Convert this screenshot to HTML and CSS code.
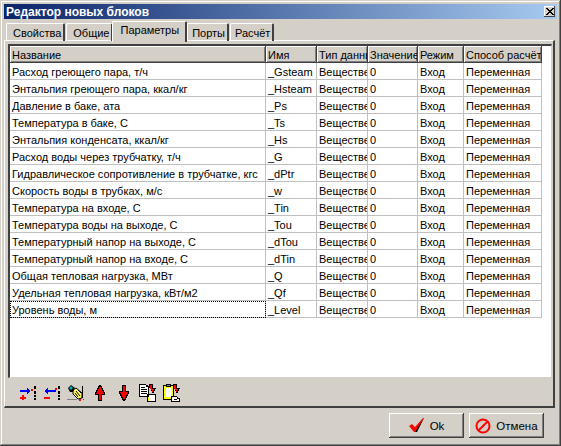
FILE: index.html
```html
<!DOCTYPE html>
<html lang="ru">
<head>
    <meta charset="UTF-8">
    <title>Редактор новых блоков</title>
    <link rel="stylesheet" href="styles.css">
</head>
<body>
    <div class="window">
        <div class="titlebar">
            <span class="title">Редактор новых блоков</span>
            <span class="close-btn">
                <svg width="8" height="7" viewBox="0 0 8 7" shape-rendering="crispEdges"><path d="M0 0h2v1h-2zM6 0h2v1h-2zM1 1h2v1h-2zM5 1h2v1h-2zM2 2h4v1h-4zM3 3h2v1h-2zM2 4h4v1h-4zM1 5h2v1h-2zM5 5h2v1h-2zM0 6h2v1h-2zM6 6h2v1h-2z" fill="#000"/></svg>
            </span>
        </div>

        <div class="tabs">
            <div class="tab">Свойства</div>
            <div class="tab">Общие</div>
            <div class="tab active">Параметры</div>
            <div class="tab">Порты</div>
            <div class="tab">Расчёт</div>
        </div>

        <div class="panel">
            <div class="grid-box">
                <div class="row head">
                    <div class="cell">Название</div>
                    <div class="cell">Имя</div>
                    <div class="cell">Тип данных</div>
                    <div class="cell">Значение</div>
                    <div class="cell">Режим</div>
                    <div class="cell">Способ расчёта</div>
                </div>
                <div class="row"><div class="cell">Расход греющего пара, т/ч</div><div class="cell">_Gsteam</div><div class="cell">Вещественное</div><div class="cell">0</div><div class="cell">Вход</div><div class="cell">Переменная</div></div>
                <div class="row"><div class="cell">Энтальпия греющего пара, ккал/кг</div><div class="cell">_Hsteam</div><div class="cell">Вещественное</div><div class="cell">0</div><div class="cell">Вход</div><div class="cell">Переменная</div></div>
                <div class="row"><div class="cell">Давление в баке, ата</div><div class="cell">_Ps</div><div class="cell">Вещественное</div><div class="cell">0</div><div class="cell">Вход</div><div class="cell">Переменная</div></div>
                <div class="row"><div class="cell">Температура в баке, С</div><div class="cell">_Ts</div><div class="cell">Вещественное</div><div class="cell">0</div><div class="cell">Вход</div><div class="cell">Переменная</div></div>
                <div class="row"><div class="cell">Энтальпия конденсата, ккал/кг</div><div class="cell">_Hs</div><div class="cell">Вещественное</div><div class="cell">0</div><div class="cell">Вход</div><div class="cell">Переменная</div></div>
                <div class="row"><div class="cell">Расход воды через трубчатку, т/ч</div><div class="cell">_G</div><div class="cell">Вещественное</div><div class="cell">0</div><div class="cell">Вход</div><div class="cell">Переменная</div></div>
                <div class="row"><div class="cell">Гидравлическое сопротивление в трубчатке, кгс</div><div class="cell">_dPtr</div><div class="cell">Вещественное</div><div class="cell">0</div><div class="cell">Вход</div><div class="cell">Переменная</div></div>
                <div class="row"><div class="cell">Скорость воды в трубках, м/с</div><div class="cell">_w</div><div class="cell">Вещественное</div><div class="cell">0</div><div class="cell">Вход</div><div class="cell">Переменная</div></div>
                <div class="row"><div class="cell">Температура на входе, С</div><div class="cell">_Tin</div><div class="cell">Вещественное</div><div class="cell">0</div><div class="cell">Вход</div><div class="cell">Переменная</div></div>
                <div class="row"><div class="cell">Температура воды на выходе, С</div><div class="cell">_Tou</div><div class="cell">Вещественное</div><div class="cell">0</div><div class="cell">Вход</div><div class="cell">Переменная</div></div>
                <div class="row"><div class="cell">Температурный напор на выходе, С</div><div class="cell">_dTou</div><div class="cell">Вещественное</div><div class="cell">0</div><div class="cell">Вход</div><div class="cell">Переменная</div></div>
                <div class="row"><div class="cell">Температурный напор на входе, С</div><div class="cell">_dTin</div><div class="cell">Вещественное</div><div class="cell">0</div><div class="cell">Вход</div><div class="cell">Переменная</div></div>
                <div class="row"><div class="cell">Общая тепловая нагрузка, МВт</div><div class="cell">_Q</div><div class="cell">Вещественное</div><div class="cell">0</div><div class="cell">Вход</div><div class="cell">Переменная</div></div>
                <div class="row"><div class="cell">Удельная тепловая нагрузка, кВт/м2</div><div class="cell">_Qf</div><div class="cell">Вещественное</div><div class="cell">0</div><div class="cell">Вход</div><div class="cell">Переменная</div></div>
                <div class="row"><div class="cell focused">Уровень воды, м</div><div class="cell">_Level</div><div class="cell">Вещественное</div><div class="cell">0</div><div class="cell">Вход</div><div class="cell">Переменная</div></div>
            </div>

            <div class="toolbar">
                <span class="tool"><svg width="18" height="16" viewBox="0 0 18 16" shape-rendering="crispEdges"><path d="M1 5h9v2h-9zM8 3h1v6h-1zM9 4h1v4h-1zM10 5h1v2h-1z" fill="#00f"/><path d="M3 10h2v5h-2zM1 12h6v2h-6z" fill="#f00"/><path d="M12 4h2v2h-2z" fill="#f00"/><path d="M15 1h2v3h-2zM15 6h2v3h-2zM15 10h2v2h-2zM15 13h2v2h-2z" fill="#000"/></svg></span>
                <span class="tool"><svg width="18" height="16" viewBox="0 0 18 16" shape-rendering="crispEdges"><path d="M4 5h9v2h-9zM4 3h1v6h-1zM3 4h1v4h-1zM2 5h1v2h-1z" fill="#00f"/><path d="M1 12h6v2h-6z" fill="#f00"/><path d="M12 3h2v2h-2z" fill="#f00"/><path d="M15 1h2v3h-2zM15 6h2v3h-2zM15 10h2v2h-2zM15 13h2v2h-2z" fill="#000"/></svg></span>
                <span class="tool"><svg width="18" height="16" viewBox="0 0 18 16"><path d="M6 5L9 3L15 8V13L11 14L6 9Z" fill="#ffff60" stroke="#000"/><path d="M9 6L13 11M11 5L14 8M8 8L11 12" stroke="#000" fill="none"/><path d="M15.5 1V13" stroke="#000"/><path d="M1 3L4 0L8 3L6 7L3 7Z" fill="#000"/><path d="M2 3L4 1L6 3L4 5Z" fill="#00b0b0"/><path d="M0 14.5H10" stroke="#808080"/><path d="M12 14h2v2h-2zM16 14h1v1h-1z" fill="#f00"/></svg></span>
                <span class="tool"><svg width="16" height="16" viewBox="0 0 16 16" shape-rendering="crispEdges"><path d="M7 0h2v1h1v2h1v2h1v2h1v3h-3v6h-4v-6h-3v-3h1v-2h1v-2h1v-2h1z" fill="#000"/><path d="M7 2h2v2h1v2h1v2h1v1h-3v6h-2v-6h-3v-1h1v-2h1v-2h1z" fill="#f00"/></svg></span>
                <span class="tool"><svg width="16" height="16" viewBox="0 0 16 16" shape-rendering="crispEdges"><path d="M6 0h4v6h3v3h-1v2h-1v2h-1v2h-1v1h-2v-1h-1v-2h-1v-2h-1v-2h-1v-3h3z" fill="#000"/><path d="M7 1h2v6h3v1h-1v2h-1v2h-1v2h-2v-2h-1v-2h-1v-2h-1v-1h3z" fill="#f00"/></svg></span>
                <span class="tool"><svg width="18" height="18" viewBox="0 0 18 18" shape-rendering="crispEdges"><path d="M0 0h7v1h2v1h1v11h-10z" fill="#000"/><path d="M1 1h6v2h2v9h-8z" fill="#fff"/><path d="M2 3h4v1h-4zM2 5h6v1h-6zM2 7h6v1h-6zM2 9h6v1h-6z" fill="#000"/><path d="M8 10h9v8h-9z" fill="#000"/><path d="M9 13h1v4h-1z" fill="#ffff00"/><path d="M10 11h6v6h-6z" fill="#fff"/><path d="M10 0h4v4h3v1h-1v2h-1v2h-2v-2h-1v-2h-1v-1h-1z" fill="#000"/><path d="M11 1h2v4h2v1h-1v2h-1v-2h-1v-1h-1z" fill="#f00"/></svg></span>
                <span class="tool"><svg width="18" height="18" viewBox="0 0 18 18" shape-rendering="crispEdges"><path d="M0 1h11v15h-11z" fill="#000"/><path d="M1 2h9v13h-9z" fill="#ffff00"/><path d="M3 4h5v9h-5z" fill="#fff"/><path d="M3 0h5v3h-5z" fill="#000"/><path d="M4 1h3v1h-3z" fill="#808080"/><path d="M8 12h6v1h1v1h2v4h-9z" fill="#000"/><path d="M9 13h5v2h2v2h-7z" fill="#fff"/><path d="M11 15h3v1h-3z" fill="#000"/><path d="M10 0h4v4h3v1h-1v2h-1v2h-2v-2h-1v-2h-1v-1h-1z" fill="#000"/><path d="M11 1h2v4h2v1h-1v2h-1v-2h-1v-1h-1z" fill="#f00"/></svg></span>
            </div>
        </div>

        <div class="footer">
            <button class="btn">
                <svg width="16" height="15" viewBox="0 0 16 15"><path d="M0 8l3-2 3 3 8-9h1l-8 14h-2z" fill="#f00"/><path d="M6 14l9-14-7 14z" fill="#000"/></svg>
                Ok
            </button>
            <button class="btn">
                <svg width="16" height="16" viewBox="0 0 16 16"><circle cx="8" cy="8" r="6.5" fill="none" stroke="#f00" stroke-width="2"/><path d="M3.5 12.5l9-9" stroke="#f00" stroke-width="2"/></svg>
                Отмена
            </button>
        </div>
    </div>
</body>
</html>
```

FILE: styles.css
```css
/* Whole dialog */
body {
    margin: 0;
    background: #d4d0c8;
    font-family: "Liberation Sans", Arial, sans-serif;
    font-size: 11px;
    color: #000;
}

.window {
    box-sizing: border-box;
    width: 561px;
    height: 446px;
    padding: 4px;
    background: #d4d0c8;
    box-shadow: inset -1px -1px 0 #404040, inset 1px 1px 0 #d4d0c8, inset -2px -2px 0 #808080, inset 2px 2px 0 #fff;
    overflow: hidden;
}

/* Title bar */
.titlebar {
    display: flex;
    align-items: center;
    justify-content: space-between;
    height: 15px;
    padding: 0 2px;
    background: linear-gradient(to right, #0a246a, #a6caf0);
}

.title {
    color: #fff;
    font-weight: bold;
    font-size: 12px;
    line-height: 16px;
}

.close-btn {
    display: flex;
    align-items: center;
    justify-content: center;
    box-sizing: border-box;
    width: 11px;
    height: 11px;
    background: #d4d0c8;
    box-shadow: inset -1px -1px 0 #404040, inset 1px 1px 0 #fff;
}

/* Tabs */
.tabs {
    display: flex;
    height: 22px;
    padding: 2px 0 0 2px;
    box-sizing: border-box;
    align-items: flex-end;
}

.tab {
    box-sizing: border-box;
    height: 18px;
    margin-right: 1px;
    padding: 3px 2px 0 6px;
    border-left: 1px solid #fff;
    border-top: 1px solid #fff;
    border-right: 2px solid #404040;
    border-radius: 2px 2px 0 0;
    white-space: nowrap;
}

.tab.active {
    position: relative;
    z-index: 1;
    height: 21px;
    margin: -2px 0 -1px -2px;
    padding: 2px 6px 0 7px;
    background: #d4d0c8;
}

.tab.active ~ .tab {
    padding-left: 4px;
}

/* Page under the tabs */
.panel {
    box-sizing: border-box;
    width: 551px;
    height: 368px;
    margin-top: -1px;
    padding: 3px 2px 0 3px;
    border-left: 1px solid #fff;
    border-top: 1px solid #fff;
    border-right: 2px solid #404040;
    border-bottom: 2px solid #404040;
}

.grid-box {
    box-sizing: border-box;
    width: 544px;
    height: 334px;
    background: #fff;
    border-left: 2px solid #404040;
    border-top: 2px solid #404040;
    border-right: 1px solid #d4d0c8;
    border-bottom: 1px solid #d4d0c8;
    overflow: hidden;
}

.row {
    display: grid;
    grid-template-columns: 256px 51px 51px 50px 46px 78px;
    height: 17px;
    width: 532px;
}

.cell {
    box-sizing: border-box;
    height: 17px;
    line-height: 18px;
    padding-left: 2px;
    white-space: nowrap;
    overflow: hidden;
    border-right: 1px solid #c0c0c0;
    border-bottom: 1px solid #c0c0c0;
}

.head .cell {
    background: #d4d0c8;
    border-right: 1px solid #404040;
    border-bottom: 1px solid #404040;
    box-shadow: inset 1px 1px 0 #fff, inset -1px -1px 0 #808080;
}

.cell.focused {
    outline: 1px dotted #000;
    outline-offset: -1px;
}

/* Toolbar under the grid */
.toolbar {
    display: flex;
    align-items: center;
    height: 24px;
    padding-left: 8px;
    margin-top: 3px;
}

.tool {
    display: flex;
    justify-content: center;
    width: 24px;
}

/* Bottom buttons */
.footer {
    display: flex;
    justify-content: flex-end;
    gap: 5px;
    padding: 5px 13px 0 0;
}

.btn {
    display: flex;
    align-items: center;
    justify-content: center;
    gap: 5px;
    box-sizing: border-box;
    width: 75px;
    height: 25px;
    padding: 0;
    font-family: inherit;
    font-size: 11.5px;
    background: #d4d0c8;
    border: none;
    box-shadow: inset -1px -1px 0 #404040, inset 1px 1px 0 #fff, inset -2px -2px 0 #808080;
}
```
